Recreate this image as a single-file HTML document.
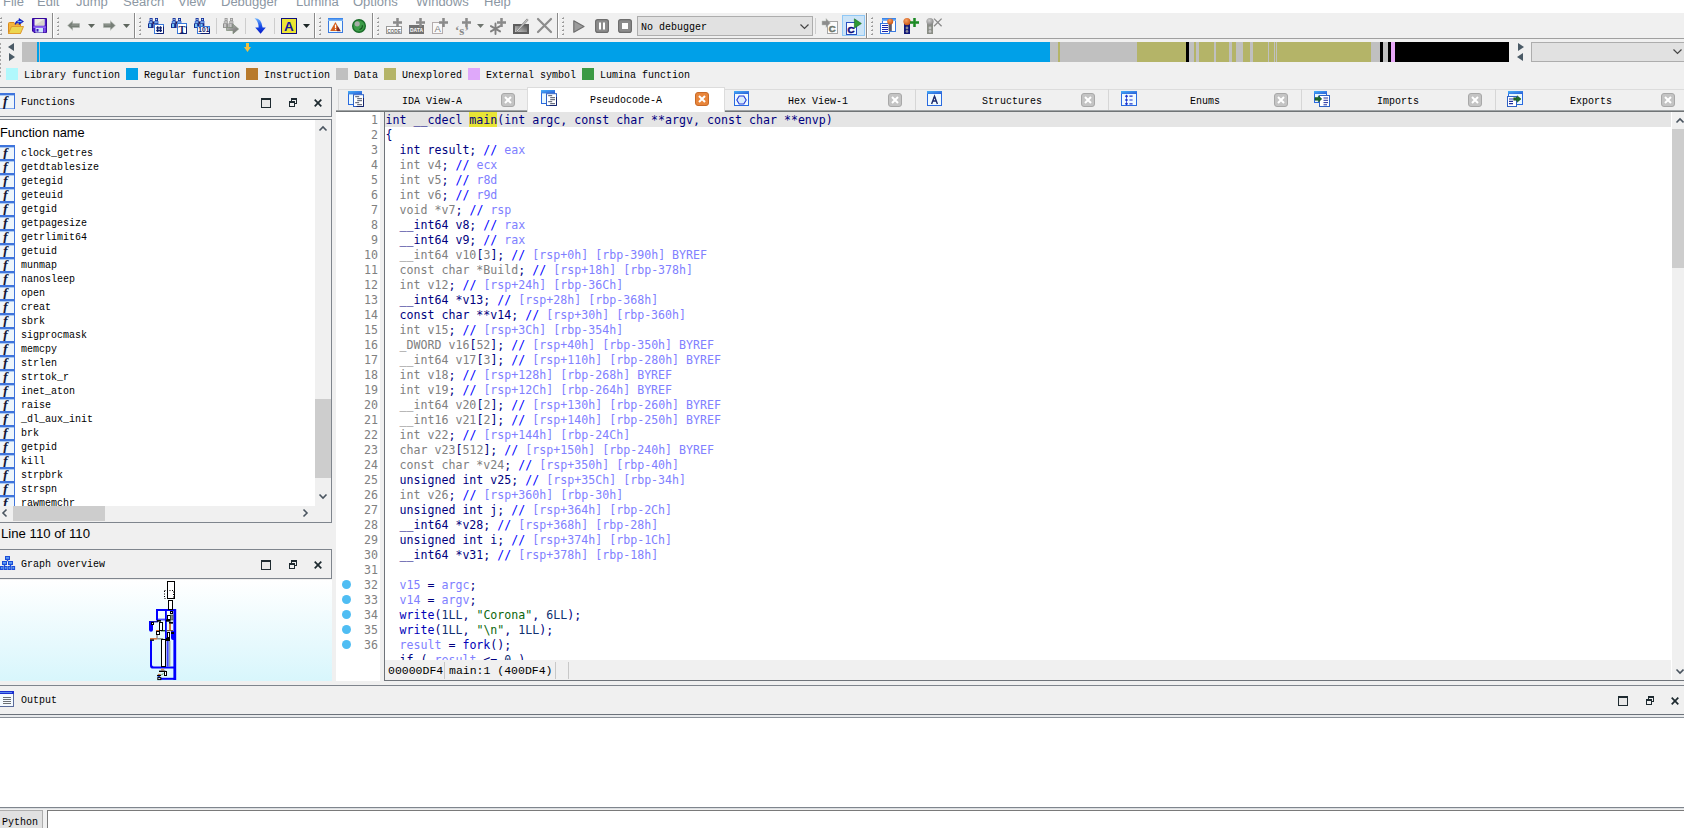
<!DOCTYPE html>
<html lang="en"><head><meta charset="utf-8"><title>IDA</title>
<style>
*{box-sizing:border-box}
html,body{margin:0;padding:0}
body{width:1684px;height:828px;overflow:hidden;background:#f0f0f0;position:relative;font-family:"Liberation Sans",sans-serif;font-size:12px;color:#000}
.a{position:absolute}
.ss{position:absolute;margin-top:1px;font-family:"Liberation Mono",monospace;font-size:11.7px;line-height:14px;height:14px;white-space:nowrap;transform:scaleX(.8546);transform-origin:0 0;color:#000}
.sans{position:absolute;font-family:"Liberation Sans",sans-serif;font-size:12.8px;line-height:14px;white-space:nowrap}
.code{position:absolute;left:385.5px;font-family:"DejaVu Sans Mono","Liberation Mono",monospace;font-size:11.627px;line-height:15px;height:15px;white-space:pre;color:#000080}
.ln{position:absolute;font-family:"DejaVu Sans Mono","Liberation Mono",monospace;font-size:11.627px;line-height:15px;height:15px;width:42px;text-align:right;color:#808080;left:336px}
.g{color:#808080}.c{color:#0000ff}.r{color:#8080ff}.s{color:#0c660c}.f{color:#0000b8}.m{color:#103070}
.dot{position:absolute;left:342px;width:9px;height:9px;border-radius:50%;background:#4fbdf3}
svg{position:absolute;overflow:visible}
</style></head>
<body>
<div class="a" style="left:0;top:0;width:1684px;height:13px;background:#fff;overflow:hidden">
<span class="sans" style="left:3px;top:-5px;color:#8c97a3;font-size:13px">File</span>
<span class="sans" style="left:37px;top:-5px;color:#8c97a3;font-size:13px">Edit</span>
<span class="sans" style="left:76px;top:-5px;color:#8c97a3;font-size:13px">Jump</span>
<span class="sans" style="left:123px;top:-5px;color:#8c97a3;font-size:13px">Search</span>
<span class="sans" style="left:178px;top:-5px;color:#8c97a3;font-size:13px">View</span>
<span class="sans" style="left:221px;top:-5px;color:#8c97a3;font-size:13px">Debugger</span>
<span class="sans" style="left:296px;top:-5px;color:#8c97a3;font-size:13px">Lumina</span>
<span class="sans" style="left:353px;top:-5px;color:#8c97a3;font-size:13px">Options</span>
<span class="sans" style="left:416px;top:-5px;color:#8c97a3;font-size:13px">Windows</span>
<span class="sans" style="left:484px;top:-5px;color:#8c97a3;font-size:13px">Help</span>
</div>
<div class="a" style="left:0px;top:13px;width:1684px;height:26px;background:#f0f0f0;"></div>
<div class="a" style="left:0px;top:38px;width:1684px;height:1px;background:#a0a0a0;"></div>
<div class="a" style="left:1px;top:17px;width:1px;height:1px;background:#b4b4b4;"></div>
<div class="a" style="left:0px;top:18px;width:2px;height:1px;background:#9a9a9a;"></div>
<div class="a" style="left:0px;top:19px;width:1px;height:1px;background:#fafafa;"></div>
<div class="a" style="left:1px;top:21px;width:1px;height:1px;background:#b4b4b4;"></div>
<div class="a" style="left:0px;top:22px;width:2px;height:1px;background:#9a9a9a;"></div>
<div class="a" style="left:0px;top:23px;width:1px;height:1px;background:#fafafa;"></div>
<div class="a" style="left:1px;top:25px;width:1px;height:1px;background:#b4b4b4;"></div>
<div class="a" style="left:0px;top:26px;width:2px;height:1px;background:#9a9a9a;"></div>
<div class="a" style="left:0px;top:27px;width:1px;height:1px;background:#fafafa;"></div>
<div class="a" style="left:1px;top:29px;width:1px;height:1px;background:#b4b4b4;"></div>
<div class="a" style="left:0px;top:30px;width:2px;height:1px;background:#9a9a9a;"></div>
<div class="a" style="left:0px;top:31px;width:1px;height:1px;background:#fafafa;"></div>
<div class="a" style="left:1px;top:33px;width:1px;height:1px;background:#b4b4b4;"></div>
<div class="a" style="left:0px;top:34px;width:2px;height:1px;background:#9a9a9a;"></div>
<div class="a" style="left:0px;top:35px;width:1px;height:1px;background:#fafafa;"></div>
<div class="a" style="left:52px;top:13px;width:1px;height:25px;background:#8a8a8a;"></div>
<div class="a" style="left:53px;top:13px;width:1px;height:25px;background:#fff;"></div>
<div class="a" style="left:58px;top:17px;width:1px;height:1px;background:#b4b4b4;"></div>
<div class="a" style="left:57px;top:18px;width:2px;height:1px;background:#9a9a9a;"></div>
<div class="a" style="left:57px;top:19px;width:1px;height:1px;background:#fafafa;"></div>
<div class="a" style="left:58px;top:21px;width:1px;height:1px;background:#b4b4b4;"></div>
<div class="a" style="left:57px;top:22px;width:2px;height:1px;background:#9a9a9a;"></div>
<div class="a" style="left:57px;top:23px;width:1px;height:1px;background:#fafafa;"></div>
<div class="a" style="left:58px;top:25px;width:1px;height:1px;background:#b4b4b4;"></div>
<div class="a" style="left:57px;top:26px;width:2px;height:1px;background:#9a9a9a;"></div>
<div class="a" style="left:57px;top:27px;width:1px;height:1px;background:#fafafa;"></div>
<div class="a" style="left:58px;top:29px;width:1px;height:1px;background:#b4b4b4;"></div>
<div class="a" style="left:57px;top:30px;width:2px;height:1px;background:#9a9a9a;"></div>
<div class="a" style="left:57px;top:31px;width:1px;height:1px;background:#fafafa;"></div>
<div class="a" style="left:58px;top:33px;width:1px;height:1px;background:#b4b4b4;"></div>
<div class="a" style="left:57px;top:34px;width:2px;height:1px;background:#9a9a9a;"></div>
<div class="a" style="left:57px;top:35px;width:1px;height:1px;background:#fafafa;"></div>
<div class="a" style="left:134px;top:13px;width:1px;height:25px;background:#8a8a8a;"></div>
<div class="a" style="left:135px;top:13px;width:1px;height:25px;background:#fff;"></div>
<div class="a" style="left:140px;top:17px;width:1px;height:1px;background:#b4b4b4;"></div>
<div class="a" style="left:139px;top:18px;width:2px;height:1px;background:#9a9a9a;"></div>
<div class="a" style="left:139px;top:19px;width:1px;height:1px;background:#fafafa;"></div>
<div class="a" style="left:140px;top:21px;width:1px;height:1px;background:#b4b4b4;"></div>
<div class="a" style="left:139px;top:22px;width:2px;height:1px;background:#9a9a9a;"></div>
<div class="a" style="left:139px;top:23px;width:1px;height:1px;background:#fafafa;"></div>
<div class="a" style="left:140px;top:25px;width:1px;height:1px;background:#b4b4b4;"></div>
<div class="a" style="left:139px;top:26px;width:2px;height:1px;background:#9a9a9a;"></div>
<div class="a" style="left:139px;top:27px;width:1px;height:1px;background:#fafafa;"></div>
<div class="a" style="left:140px;top:29px;width:1px;height:1px;background:#b4b4b4;"></div>
<div class="a" style="left:139px;top:30px;width:2px;height:1px;background:#9a9a9a;"></div>
<div class="a" style="left:139px;top:31px;width:1px;height:1px;background:#fafafa;"></div>
<div class="a" style="left:140px;top:33px;width:1px;height:1px;background:#b4b4b4;"></div>
<div class="a" style="left:139px;top:34px;width:2px;height:1px;background:#9a9a9a;"></div>
<div class="a" style="left:139px;top:35px;width:1px;height:1px;background:#fafafa;"></div>
<div class="a" style="left:216px;top:18px;width:1px;height:16px;background:#cdcdcd;"></div>
<div class="a" style="left:245px;top:18px;width:1px;height:16px;background:#cdcdcd;"></div>
<div class="a" style="left:274px;top:18px;width:1px;height:16px;background:#cdcdcd;"></div>
<div class="a" style="left:314px;top:13px;width:1px;height:25px;background:#8a8a8a;"></div>
<div class="a" style="left:315px;top:13px;width:1px;height:25px;background:#fff;"></div>
<div class="a" style="left:320px;top:17px;width:1px;height:1px;background:#b4b4b4;"></div>
<div class="a" style="left:319px;top:18px;width:2px;height:1px;background:#9a9a9a;"></div>
<div class="a" style="left:319px;top:19px;width:1px;height:1px;background:#fafafa;"></div>
<div class="a" style="left:320px;top:21px;width:1px;height:1px;background:#b4b4b4;"></div>
<div class="a" style="left:319px;top:22px;width:2px;height:1px;background:#9a9a9a;"></div>
<div class="a" style="left:319px;top:23px;width:1px;height:1px;background:#fafafa;"></div>
<div class="a" style="left:320px;top:25px;width:1px;height:1px;background:#b4b4b4;"></div>
<div class="a" style="left:319px;top:26px;width:2px;height:1px;background:#9a9a9a;"></div>
<div class="a" style="left:319px;top:27px;width:1px;height:1px;background:#fafafa;"></div>
<div class="a" style="left:320px;top:29px;width:1px;height:1px;background:#b4b4b4;"></div>
<div class="a" style="left:319px;top:30px;width:2px;height:1px;background:#9a9a9a;"></div>
<div class="a" style="left:319px;top:31px;width:1px;height:1px;background:#fafafa;"></div>
<div class="a" style="left:320px;top:33px;width:1px;height:1px;background:#b4b4b4;"></div>
<div class="a" style="left:319px;top:34px;width:2px;height:1px;background:#9a9a9a;"></div>
<div class="a" style="left:319px;top:35px;width:1px;height:1px;background:#fafafa;"></div>
<div class="a" style="left:372px;top:13px;width:1px;height:25px;background:#8a8a8a;"></div>
<div class="a" style="left:373px;top:13px;width:1px;height:25px;background:#fff;"></div>
<div class="a" style="left:378px;top:17px;width:1px;height:1px;background:#b4b4b4;"></div>
<div class="a" style="left:377px;top:18px;width:2px;height:1px;background:#9a9a9a;"></div>
<div class="a" style="left:377px;top:19px;width:1px;height:1px;background:#fafafa;"></div>
<div class="a" style="left:378px;top:21px;width:1px;height:1px;background:#b4b4b4;"></div>
<div class="a" style="left:377px;top:22px;width:2px;height:1px;background:#9a9a9a;"></div>
<div class="a" style="left:377px;top:23px;width:1px;height:1px;background:#fafafa;"></div>
<div class="a" style="left:378px;top:25px;width:1px;height:1px;background:#b4b4b4;"></div>
<div class="a" style="left:377px;top:26px;width:2px;height:1px;background:#9a9a9a;"></div>
<div class="a" style="left:377px;top:27px;width:1px;height:1px;background:#fafafa;"></div>
<div class="a" style="left:378px;top:29px;width:1px;height:1px;background:#b4b4b4;"></div>
<div class="a" style="left:377px;top:30px;width:2px;height:1px;background:#9a9a9a;"></div>
<div class="a" style="left:377px;top:31px;width:1px;height:1px;background:#fafafa;"></div>
<div class="a" style="left:378px;top:33px;width:1px;height:1px;background:#b4b4b4;"></div>
<div class="a" style="left:377px;top:34px;width:2px;height:1px;background:#9a9a9a;"></div>
<div class="a" style="left:377px;top:35px;width:1px;height:1px;background:#fafafa;"></div>
<div class="a" style="left:557px;top:13px;width:1px;height:25px;background:#8a8a8a;"></div>
<div class="a" style="left:558px;top:13px;width:1px;height:25px;background:#fff;"></div>
<div class="a" style="left:563px;top:17px;width:1px;height:1px;background:#b4b4b4;"></div>
<div class="a" style="left:562px;top:18px;width:2px;height:1px;background:#9a9a9a;"></div>
<div class="a" style="left:562px;top:19px;width:1px;height:1px;background:#fafafa;"></div>
<div class="a" style="left:563px;top:21px;width:1px;height:1px;background:#b4b4b4;"></div>
<div class="a" style="left:562px;top:22px;width:2px;height:1px;background:#9a9a9a;"></div>
<div class="a" style="left:562px;top:23px;width:1px;height:1px;background:#fafafa;"></div>
<div class="a" style="left:563px;top:25px;width:1px;height:1px;background:#b4b4b4;"></div>
<div class="a" style="left:562px;top:26px;width:2px;height:1px;background:#9a9a9a;"></div>
<div class="a" style="left:562px;top:27px;width:1px;height:1px;background:#fafafa;"></div>
<div class="a" style="left:563px;top:29px;width:1px;height:1px;background:#b4b4b4;"></div>
<div class="a" style="left:562px;top:30px;width:2px;height:1px;background:#9a9a9a;"></div>
<div class="a" style="left:562px;top:31px;width:1px;height:1px;background:#fafafa;"></div>
<div class="a" style="left:563px;top:33px;width:1px;height:1px;background:#b4b4b4;"></div>
<div class="a" style="left:562px;top:34px;width:2px;height:1px;background:#9a9a9a;"></div>
<div class="a" style="left:562px;top:35px;width:1px;height:1px;background:#fafafa;"></div>
<div class="a" style="left:815px;top:18px;width:1px;height:16px;background:#cdcdcd;"></div>
<div class="a" style="left:866px;top:13px;width:1px;height:25px;background:#8a8a8a;"></div>
<div class="a" style="left:867px;top:13px;width:1px;height:25px;background:#fff;"></div>
<div class="a" style="left:872px;top:17px;width:1px;height:1px;background:#b4b4b4;"></div>
<div class="a" style="left:871px;top:18px;width:2px;height:1px;background:#9a9a9a;"></div>
<div class="a" style="left:871px;top:19px;width:1px;height:1px;background:#fafafa;"></div>
<div class="a" style="left:872px;top:21px;width:1px;height:1px;background:#b4b4b4;"></div>
<div class="a" style="left:871px;top:22px;width:2px;height:1px;background:#9a9a9a;"></div>
<div class="a" style="left:871px;top:23px;width:1px;height:1px;background:#fafafa;"></div>
<div class="a" style="left:872px;top:25px;width:1px;height:1px;background:#b4b4b4;"></div>
<div class="a" style="left:871px;top:26px;width:2px;height:1px;background:#9a9a9a;"></div>
<div class="a" style="left:871px;top:27px;width:1px;height:1px;background:#fafafa;"></div>
<div class="a" style="left:872px;top:29px;width:1px;height:1px;background:#b4b4b4;"></div>
<div class="a" style="left:871px;top:30px;width:2px;height:1px;background:#9a9a9a;"></div>
<div class="a" style="left:871px;top:31px;width:1px;height:1px;background:#fafafa;"></div>
<div class="a" style="left:872px;top:33px;width:1px;height:1px;background:#b4b4b4;"></div>
<div class="a" style="left:871px;top:34px;width:2px;height:1px;background:#9a9a9a;"></div>
<div class="a" style="left:871px;top:35px;width:1px;height:1px;background:#fafafa;"></div>
<div class="a" style="left:842px;top:15px;width:23px;height:21px;background:#cce4f7;border:1px solid #90c8f6"></div>
<svg width="0" height="0" style="left:0;top:0"><defs>
<linearGradient id="gb" x1="0" y1="0" x2="1" y2="1"><stop offset="0" stop-color="#9cc4f4"/><stop offset=".5" stop-color="#2f62cc"/><stop offset="1" stop-color="#16307a"/></linearGradient>
<linearGradient id="gg" x1="0" y1="0" x2="1" y2="1"><stop offset="0" stop-color="#c8c8c8"/><stop offset=".6" stop-color="#8a8a8a"/><stop offset="1" stop-color="#6a6a6a"/></linearGradient>
<linearGradient id="gd" x1="0" y1="0" x2="0" y2="1"><stop offset="0" stop-color="#6ab0ff"/><stop offset=".5" stop-color="#1a50e8"/><stop offset="1" stop-color="#0818c8"/></linearGradient>
<linearGradient id="gt2" x1="0" y1="0" x2="1" y2="1"><stop offset="0" stop-color="#46b0fa"/><stop offset="1" stop-color="#2a5cd6"/></linearGradient>
<linearGradient id="gt" x1="0" y1="0" x2="0" y2="1"><stop offset="0" stop-color="#2a7ae8"/><stop offset="1" stop-color="#8cc0f8"/></linearGradient>
<linearGradient id="gp" x1="0" y1="1" x2="1" y2="0"><stop offset="0" stop-color="#d8d8d8"/><stop offset="1" stop-color="#505050"/></linearGradient>
<radialGradient id="go" cx=".4" cy=".35" r=".7"><stop offset="0" stop-color="#f8a060"/><stop offset="1" stop-color="#c85010"/></radialGradient>
<radialGradient id="gy" cx=".4" cy=".35" r=".7"><stop offset="0" stop-color="#d0d0d0"/><stop offset="1" stop-color="#808080"/></radialGradient>
</defs></svg>
<svg style="left:8px;top:18px" width="16" height="16" viewBox="0 0 16 16"><path d="M0.5 5.5Q0.5 4.5 1.5 4.5H6L7.5 6H12.5V15.5H0.5Z" fill="#f4b43c" stroke="#d88a1c"/><path d="M3.5 8.5H15.5L12.5 15.5H0.5Z" fill="#ecd650" stroke="#e09a30"/><path d="M7 6.5Q7.5 2.5 11 2.5V0.5L15.5 3.5L11 6.5V4.6Q8.6 4.6 7 6.5Z" fill="#1420d8" stroke="#0c14a8" stroke-width=".6"/><path d="M9.6 3.6H13.6" stroke="#7cd8fc" stroke-width="1"/></svg>
<svg style="left:32px;top:18px" width="15" height="15" viewBox="0 0 15 15"><path d="M0.5 0.5H14.5V14.5H2L0.5 13Z" fill="#4a18c8" stroke="#36089c"/><rect x="2.5" y="1" width="10" height="6.5" fill="#eceae2"/><path d="M2.5 7.5L12.5 1V7.5Z" fill="#d8d4cc"/><rect x="1.4" y="8.4" width="12.4" height="1.4" fill="#a47cff"/><rect x="11.6" y="10" width="2" height="4.5" fill="#a47cff" opacity=".6"/><rect x="3.5" y="10" width="7.5" height="4.5" fill="#cfe6fa"/><rect x="4.5" y="11" width="2" height="2.6" fill="#3a18b8"/></svg>
<svg style="left:67px;top:20px" width="13" height="11" viewBox="0 0 13 11"><path d="M6 0V3H13V8H6V11L0 5.5Z" fill="#c6cac6"/><path d="M5.4 1.4V3.7H12.3V7.3H5.4V9.6L1 5.5Z" fill="#767e76"/><path d="M5.4 4.4H11.6V5.4H4Z" fill="#9aa09a"/></svg>
<svg style="left:103px;top:20px" width="13" height="11" viewBox="0 0 13 11"><path d="M7 0V3H0V8H7V11L13 5.5Z" fill="#c6cac6"/><path d="M7.6 1.4V3.7H0.7V7.3H7.6V9.6L12 5.5Z" fill="#767e76"/><path d="M1.4 4.4H7.6V5.4H1.4Z" fill="#9aa09a"/></svg>
<svg style="left:88px;top:24px" width="7" height="4" viewBox="0 0 7 4"><path d="M0 0H7L3.5 4Z" fill="#5e665e"/></svg>
<svg style="left:123px;top:24px" width="7" height="4" viewBox="0 0 7 4"><path d="M0 0H7L3.5 4Z" fill="#5e665e"/></svg>
<svg style="left:148px;top:18px" width="16" height="16" viewBox="0 0 16 16"><rect x="1.6" y="0" width="3" height="3.4" fill="#17309c"/><rect x="0.8" y="3" width="4.2" height="2.6" fill="#2a5ccc"/><rect x="0" y="5.2" width="5" height="4.8" rx=".5" fill="#14268a"/><rect x="2.4" y="0.9" width="1.3" height="1.3" fill="#b4dcfa"/><rect x="1.6" y="3.6" width="2.6" height="1" fill="#b4dcfa"/><rect x="1" y="5.8" width="2.2" height="3.4" fill="#74c4f6"/><rect x="7.0" y="0" width="3" height="3.4" fill="#17309c"/><rect x="6.2" y="3" width="4.2" height="2.6" fill="#2a5ccc"/><rect x="5.4" y="5.2" width="5" height="4.8" rx=".5" fill="#14268a"/><rect x="7.800000000000001" y="0.9" width="1.3" height="1.3" fill="#b4dcfa"/><rect x="7.0" y="3.6" width="2.6" height="1" fill="#b4dcfa"/><rect x="6.4" y="5.8" width="2.2" height="3.4" fill="#74c4f6"/><rect x="4.6" y="3.4" width="1.4" height="2.4" fill="#2a1a4a"/><rect x="6.5" y="6.5" width="9" height="9" fill="#fff" stroke="#3a78d8"/><path d="M15.5 8.5V15.5H8.5" fill="none" stroke="#102070"/><path d="M9.7 8.2v5.8M12.5 8.2v5.8M8.2 9.8h5.8M8.2 12.5h5.8" stroke="#0c2070" stroke-width="1.3"/></svg>
<svg style="left:171px;top:18px" width="16" height="16" viewBox="0 0 16 16"><rect x="1.6" y="0" width="3" height="3.4" fill="#17309c"/><rect x="0.8" y="3" width="4.2" height="2.6" fill="#2a5ccc"/><rect x="0" y="5.2" width="5" height="4.8" rx=".5" fill="#14268a"/><rect x="2.4" y="0.9" width="1.3" height="1.3" fill="#b4dcfa"/><rect x="1.6" y="3.6" width="2.6" height="1" fill="#b4dcfa"/><rect x="1" y="5.8" width="2.2" height="3.4" fill="#74c4f6"/><rect x="7.0" y="0" width="3" height="3.4" fill="#17309c"/><rect x="6.2" y="3" width="4.2" height="2.6" fill="#2a5ccc"/><rect x="5.4" y="5.2" width="5" height="4.8" rx=".5" fill="#14268a"/><rect x="7.800000000000001" y="0.9" width="1.3" height="1.3" fill="#b4dcfa"/><rect x="7.0" y="3.6" width="2.6" height="1" fill="#b4dcfa"/><rect x="6.4" y="5.8" width="2.2" height="3.4" fill="#74c4f6"/><rect x="4.6" y="3.4" width="1.4" height="2.4" fill="#2a1a4a"/><rect x="6.5" y="5.5" width="9" height="10" fill="#fff" stroke="#3a78d8"/><path d="M15.5 8.5V15.5H8.5" fill="none" stroke="#102070"/><text x="7.6" y="14.6" font-family="Liberation Serif,serif" font-size="10.5" font-weight="bold" fill="#0c1868" >T</text></svg>
<svg style="left:194px;top:18px" width="16" height="16" viewBox="0 0 16 16"><rect x="1.6" y="0" width="3" height="3.4" fill="#17309c"/><rect x="0.8" y="3" width="4.2" height="2.6" fill="#2a5ccc"/><rect x="0" y="5.2" width="5" height="4.8" rx=".5" fill="#14268a"/><rect x="2.4" y="0.9" width="1.3" height="1.3" fill="#b4dcfa"/><rect x="1.6" y="3.6" width="2.6" height="1" fill="#b4dcfa"/><rect x="1" y="5.8" width="2.2" height="3.4" fill="#74c4f6"/><rect x="7.0" y="0" width="3" height="3.4" fill="#17309c"/><rect x="6.2" y="3" width="4.2" height="2.6" fill="#2a5ccc"/><rect x="5.4" y="5.2" width="5" height="4.8" rx=".5" fill="#14268a"/><rect x="7.800000000000001" y="0.9" width="1.3" height="1.3" fill="#b4dcfa"/><rect x="7.0" y="3.6" width="2.6" height="1" fill="#b4dcfa"/><rect x="6.4" y="5.8" width="2.2" height="3.4" fill="#74c4f6"/><rect x="4.6" y="3.4" width="1.4" height="2.4" fill="#2a1a4a"/><rect x="3.5" y="8.5" width="12" height="7" fill="#fff" stroke="#3a78d8"/><path d="M15.5 10.5V15.5H6.5" fill="none" stroke="#102070"/><text x="4.3" y="14.4" font-family="Liberation Sans,sans-serif" font-size="6.6" font-weight="bold" fill="#0c1868" >101</text></svg>
<svg style="left:223px;top:18px" width="16" height="16" viewBox="0 0 16 16"><rect x="1.6" y="0" width="3" height="3.4" fill="#9a9a9a"/><rect x="0.8" y="3" width="4.2" height="2.6" fill="#a8a8a8"/><rect x="0" y="5.2" width="5" height="4.8" rx=".5" fill="#8e8e8e"/><rect x="2.4" y="0.9" width="1.3" height="1.3" fill="#d4d4d4"/><rect x="1.6" y="3.6" width="2.6" height="1" fill="#d4d4d4"/><rect x="1" y="5.8" width="2.2" height="3.4" fill="#c4c4c4"/><rect x="7.0" y="0" width="3" height="3.4" fill="#9a9a9a"/><rect x="6.2" y="3" width="4.2" height="2.6" fill="#a8a8a8"/><rect x="5.4" y="5.2" width="5" height="4.8" rx=".5" fill="#8e8e8e"/><rect x="7.800000000000001" y="0.9" width="1.3" height="1.3" fill="#d4d4d4"/><rect x="7.0" y="3.6" width="2.6" height="1" fill="#d4d4d4"/><rect x="6.4" y="5.8" width="2.2" height="3.4" fill="#c4c4c4"/><path d="M3.5 9.5H10V6.2L15.6 11L10 15.8V12.5H3.5Z" fill="url(#gg)" stroke="#7c8c78" stroke-width=".7"/></svg>
<svg style="left:254px;top:18px" width="12" height="16" viewBox="0 0 12 16"><path d="M0.5 0.3Q7.5 0 8.6 9.5H11.8L6.6 15.8L1.2 9.5H4.6Q4.6 3.5 0.5 0.3Z" fill="url(#gd)"/></svg>
<svg style="left:281px;top:18px" width="16" height="16" viewBox="0 0 16 16"><rect x="0.5" y="0.5" width="15" height="15" fill="#ece434" stroke="#10107c"/><text x="3" y="13.2" font-family="Liberation Sans,sans-serif" font-size="13.5" font-weight="bold" fill="#1414a0" >A</text></svg>
<svg style="left:303px;top:24px" width="7" height="4" viewBox="0 0 7 4"><path d="M0 0H7L3.5 4Z" fill="#1c2626"/></svg>
<svg style="left:328px;top:18px" width="15" height="15" viewBox="0 0 15 15"><rect x="0.5" y="0.5" width="14" height="14" fill="#eefafc" stroke="#3a7ae0"/><rect x="0" y="0" width="15" height="3" fill="url(#gt)"/><path d="M7.4 4L12.6 13H2.2Z" fill="#d4601c"/><path d="M9.6 8L12.8 13.2H9Z" fill="#601830" opacity=".75"/><rect x="6.9" y="6.6" width="1.2" height="3.6" fill="#fff"/><rect x="6.9" y="11" width="1.2" height="1.2" fill="#fff"/></svg>
<svg style="left:352px;top:19px" width="14" height="14" viewBox="0 0 14 14"><circle cx="7" cy="7" r="6.3" fill="#3c9c48" stroke="#1a6c2a" stroke-width="1.4"/><circle cx="5.2" cy="4.8" r="2.6" fill="#a8aca8"/><path d="M10.4 6.2Q10.6 9.6 7.4 10.6" fill="none" stroke="#14521e" stroke-width="1.1"/></svg>
<svg style="left:386px;top:18px" width="17" height="16" viewBox="0 0 17 16"><rect x="0.5" y="8.5" width="15" height="7" fill="#fdfdfd" stroke="#9a9a9a"/><text x="1.2" y="14.6" font-family="Liberation Sans,sans-serif" font-size="6" font-weight="bold" fill="#6e6e6e" textLength="13.6" lengthAdjust="spacingAndGlyphs">CODE</text><path d="M10 0h3v3h3v3h-3v3h-3v-3h-3v-3h3z" fill="#8a8a8a" opacity=".55"/><path d="M10.5 0h2v3.5h3.5v2h-3.5v3.5h-2v-3.5h-3.5v-2h3.5z" fill="#8a8a8a"/></svg>
<svg style="left:409px;top:18px" width="17" height="16" viewBox="0 0 17 16"><rect x="0" y="7" width="15" height="9" fill="#727272"/><text x="1" y="14.3" font-family="Liberation Sans,sans-serif" font-size="6" font-weight="bold" fill="#fff" textLength="13" lengthAdjust="spacingAndGlyphs">DATA</text><path d="M10 0h3v3h3v3h-3v3h-3v-3h-3v-3h3z" fill="#8a8a8a" opacity=".55"/><path d="M10.5 0h2v3.5h3.5v2h-3.5v3.5h-2v-3.5h-3.5v-2h3.5z" fill="#8a8a8a"/></svg>
<svg style="left:432px;top:18px" width="17" height="16" viewBox="0 0 17 16"><rect x="0.5" y="4.5" width="10" height="11" fill="#f8f8f8" stroke="#b4acac"/><text x="2.6" y="14" font-family="Liberation Sans,sans-serif" font-size="9.5" font-weight="normal" fill="#808080" >A</text><path d="M10 0h3v3h3v3h-3v3h-3v-3h-3v-3h3z" fill="#8a8a8a" opacity=".55"/><path d="M10.5 0h2v3.5h3.5v2h-3.5v3.5h-2v-3.5h-3.5v-2h3.5z" fill="#8a8a8a"/></svg>
<svg style="left:455px;top:18px" width="17" height="16" viewBox="0 0 17 16"><text x="0" y="16.5" font-family="Liberation Serif,serif" font-size="13" font-weight="bold" fill="#8a8a8a" >‘s’</text><path d="M10 0h3v3h3v3h-3v3h-3v-3h-3v-3h3z" fill="#8a8a8a" opacity=".55"/><path d="M10.5 0h2v3.5h3.5v2h-3.5v3.5h-2v-3.5h-3.5v-2h3.5z" fill="#8a8a8a"/></svg>
<svg style="left:477px;top:24px" width="7" height="4" viewBox="0 0 7 4"><path d="M0 0H7L3.5 4Z" fill="#6e746e"/></svg>
<svg style="left:490px;top:18px" width="17" height="16" viewBox="0 0 17 16"><path d="M5.5 5.5V16M0.9 8.1L10.1 13.4M10.1 8.1L0.9 13.4" stroke="#808080" stroke-width="1.9" fill="none" stroke-linecap="round"/><path d="M10 0h3v3h3v3h-3v3h-3v-3h-3v-3h3z" fill="#8a8a8a" opacity=".55"/><path d="M10.5 0h2v3.5h3.5v2h-3.5v3.5h-2v-3.5h-3.5v-2h3.5z" fill="#8a8a8a"/></svg>
<svg style="left:513px;top:18px" width="16" height="16" viewBox="0 0 16 16"><rect x="1" y="7" width="14" height="8" fill="url(#gp)" stroke="#5e5e5e" stroke-width="2"/><path d="M3.5 13.5L14.8 1.2" stroke="#8a8a8a" stroke-width="2.2"/><path d="M4 13L14.6 1.6" stroke="#ececec" stroke-width=".8"/></svg>
<svg style="left:537px;top:18px" width="15" height="15" viewBox="0 0 15 15"><path d="M1 1L14 14M14 1L1 14" stroke="#8c8c8c" stroke-width="2.2" fill="none" stroke-linecap="round"/></svg>
<svg style="left:573px;top:20px" width="12" height="13" viewBox="0 0 12 13"><path d="M0.8 0.8V12.2L11 6.5Z" fill="#9c9c9c" stroke="#6e6e6e" stroke-width="1.2" stroke-linejoin="round"/></svg>
<svg style="left:595px;top:19px" width="14" height="14" viewBox="0 0 14 14"><rect x="0.6" y="0.6" width="12.8" height="12.8" rx="2.2" fill="#8c8c8c" stroke="#6e6e6e" stroke-width="1.2"/><rect x="4" y="3.5" width="2" height="7" fill="#fff"/><rect x="8" y="3.5" width="2" height="7" fill="#fff"/></svg>
<svg style="left:618px;top:19px" width="14" height="14" viewBox="0 0 14 14"><rect x="0.6" y="0.6" width="12.8" height="12.8" rx="2.2" fill="#8c8c8c" stroke="#6e6e6e" stroke-width="1.2"/><rect x="4" y="4" width="6" height="6" fill="#fff"/></svg>
<svg style="left:822px;top:18px" width="17" height="16" viewBox="0 0 17 16"><rect x="5.5" y="3.5" width="10" height="12" fill="#fcfcfc" stroke="#a6a6a6"/><text x="6.8" y="14.4" font-family="Liberation Sans,sans-serif" font-size="9.6" font-weight="bold" fill="#6e786e" stroke="#6e786e" stroke-width=".5">C</text><path d="M0 3H4V0.6L8.4 5L4 9.4V7H0Z" fill="#8c8c8c" stroke="#b8c0b8" stroke-width=".5"/></svg>
<svg style="left:846px;top:18px" width="17" height="17" viewBox="0 0 17 17"><rect x="0.5" y="4.5" width="10" height="12" fill="#fcfcff" stroke="#2a50c0"/><text x="1.6" y="15.2" font-family="Liberation Sans,sans-serif" font-size="9.8" font-weight="bold" fill="#0a0a7c" stroke="#0a0a7c" stroke-width=".5">C</text><path d="M8.4 0.8V10.2L15.4 5.5Z" fill="#2c9a34" stroke="#186a20" stroke-width=".6"/></svg>
<svg style="left:880px;top:18px" width="16" height="16" viewBox="0 0 16 16"><rect x="2.5" y="0.5" width="13" height="13" fill="#fff" stroke="#3a7ae0"/><rect x="2" y="0" width="14" height="3" fill="url(#gt)"/><rect x="0.5" y="5.5" width="9" height="10" fill="#fff" stroke="#3a7ae0"/><path d="M2 7.5h6M2 9.5h6M2 11.5h6M2 13.5h6" stroke="#1828b0" stroke-width="1"/><rect x="8.6" y="5.5" width="3.2" height="7.5" fill="#5a5a6a"/><circle cx="10.2" cy="3.4" r="3" fill="url(#go)"/></svg>
<svg style="left:903px;top:18px" width="17" height="16" viewBox="0 0 17 16"><rect x="1" y="5" width="6" height="11" fill="#101878"/><circle cx="4" cy="10" r="1.4" fill="#8a8a9a"/><circle cx="4" cy="13.4" r="1.4" fill="#8a8a9a"/><circle cx="4" cy="3.6" r="3.6" fill="url(#go)"/><path d="M10 0h3v3h3v3h-3v3h-3v-3h-3v-3h3z" fill="#1c8a24" opacity=".55"/><path d="M10.5 0h2v3.5h3.5v2h-3.5v3.5h-2v-3.5h-3.5v-2h3.5z" fill="#1c8a24"/></svg>
<svg style="left:926px;top:18px" width="17" height="16" viewBox="0 0 17 16"><rect x="1" y="5" width="6" height="11" fill="#8a8e86"/><circle cx="4" cy="10" r="1.4" fill="#c4c4c4"/><circle cx="4" cy="13.4" r="1.4" fill="#c4c4c4"/><circle cx="4" cy="3.6" r="3.6" fill="url(#gy)"/><path d="M8 0.6L15.6 8.2M15.6 0.6L8 8.2" stroke="#8a8a8a" stroke-width="1.3"/></svg>
<div class="a" style="left:637px;top:16px;width:176px;height:20px;background:#e1e1e1;border:1px solid #adadad"></div>
<div class="ss" style="left:641px;top:19px;">No debugger</div>
<svg style="left:800px;top:24px" width="9" height="6" viewBox="0 0 9 6"><path d="M0.5 0.5L4.5 4.5L8.5 0.5" fill="none" stroke="#444" stroke-width="1.2"/></svg>
<div class="a" style="left:22px;top:42px;width:15px;height:20px;background:#c0c0c0;"></div>
<div class="a" style="left:37px;top:42px;width:1013px;height:20px;background:#00a0e8;"></div>
<div class="a" style="left:39px;top:42px;width:1px;height:20px;background:#b4bcc0;"></div>
<div class="a" style="left:1050px;top:42px;width:87px;height:20px;background:#c0c0c0;"></div>
<div class="a" style="left:1058px;top:42px;width:2px;height:20px;background:#b4b468;"></div>
<div class="a" style="left:1137px;top:42px;width:234px;height:20px;background:#b4b468;"></div>
<div class="a" style="left:1186px;top:42px;width:3px;height:20px;background:#000;"></div>
<div class="a" style="left:1189px;top:42px;width:5px;height:20px;background:#c0c0c0;"></div>
<div class="a" style="left:1196px;top:42px;width:3px;height:20px;background:#c0c0c0;"></div>
<div class="a" style="left:1214px;top:42px;width:2px;height:20px;background:#c0c0c0;"></div>
<div class="a" style="left:1229px;top:42px;width:3px;height:20px;background:#c0c0c0;"></div>
<div class="a" style="left:1236px;top:42px;width:7px;height:20px;background:#c0c0c0;"></div>
<div class="a" style="left:1250px;top:42px;width:3px;height:20px;background:#c0c0c0;"></div>
<div class="a" style="left:1268px;top:42px;width:1px;height:20px;background:#c0c0c0;"></div>
<div class="a" style="left:1274px;top:42px;width:1px;height:20px;background:#c0c0c0;"></div>
<div class="a" style="left:1276px;top:42px;width:1px;height:20px;background:#c0c0c0;"></div>
<div class="a" style="left:1371px;top:42px;width:9px;height:20px;background:#c0c0c0;"></div>
<div class="a" style="left:1380px;top:42px;width:3px;height:20px;background:#000;"></div>
<div class="a" style="left:1383px;top:42px;width:5px;height:20px;background:#c0c0c0;"></div>
<div class="a" style="left:1388px;top:42px;width:3px;height:20px;background:#000;"></div>
<div class="a" style="left:1391px;top:42px;width:4px;height:20px;background:#e8a8f8;"></div>
<div class="a" style="left:1395px;top:42px;width:114px;height:20px;background:#000;"></div>
<svg style="left:8px;top:43px" width="6" height="8" viewBox="0 0 6 8"><path d="M6 0V8L0 4Z" fill="#4a5a66"/></svg>
<svg style="left:9px;top:53px" width="6" height="8" viewBox="0 0 6 8"><path d="M0 0V8L6 4Z" fill="#4a5a66"/></svg>
<div class="a" style="left:0px;top:43px;width:1px;height:2px;background:#a4a4a4;"></div>
<div class="a" style="left:0px;top:47px;width:1px;height:2px;background:#a4a4a4;"></div>
<div class="a" style="left:0px;top:51px;width:1px;height:2px;background:#a4a4a4;"></div>
<div class="a" style="left:0px;top:55px;width:1px;height:2px;background:#a4a4a4;"></div>
<div class="a" style="left:0px;top:59px;width:1px;height:2px;background:#a4a4a4;"></div>
<div class="a" style="left:0px;top:63px;width:1px;height:2px;background:#a4a4a4;"></div>
<div class="a" style="left:0px;top:67px;width:1px;height:2px;background:#a4a4a4;"></div>
<div class="a" style="left:0px;top:71px;width:1px;height:2px;background:#a4a4a4;"></div>
<div class="a" style="left:0px;top:75px;width:1px;height:2px;background:#a4a4a4;"></div>
<svg style="left:1518px;top:43px" width="6" height="8" viewBox="0 0 6 8"><path d="M0 0V8L6 4Z" fill="#4a5a66"/></svg>
<svg style="left:1517px;top:53px" width="6" height="8" viewBox="0 0 6 8"><path d="M6 0V8L0 4Z" fill="#4a5a66"/></svg>
<svg style="left:244px;top:43px" width="7" height="9" viewBox="0 0 7 9"><path d="M2 0H5V4H7L3.5 9L0 4H2Z" fill="#f0c040"/></svg>
<div class="a" style="left:1531px;top:42px;width:160px;height:20px;background:#e1e1e1;border:1px solid #adadad"></div>
<svg style="left:1673px;top:49px" width="9" height="6" viewBox="0 0 9 6"><path d="M0.5 0.5L4.5 4.5L8.5 0.5" fill="none" stroke="#444" stroke-width="1.2"/></svg>
<div class="a" style="left:6px;top:68px;width:12px;height:12px;background:#b0f8fc;"></div>
<div class="ss" style="left:24px;top:67px;">Library function</div>
<div class="a" style="left:126px;top:68px;width:12px;height:12px;background:#00a0e8;"></div>
<div class="ss" style="left:144px;top:67px;">Regular function</div>
<div class="a" style="left:246px;top:68px;width:12px;height:12px;background:#b87a2c;"></div>
<div class="ss" style="left:264px;top:67px;">Instruction</div>
<div class="a" style="left:336px;top:68px;width:12px;height:12px;background:#c0c0c0;"></div>
<div class="ss" style="left:354px;top:67px;">Data</div>
<div class="a" style="left:384px;top:68px;width:12px;height:12px;background:#b4b468;"></div>
<div class="ss" style="left:402px;top:67px;">Unexplored</div>
<div class="a" style="left:468px;top:68px;width:12px;height:12px;background:#dfa8fa;"></div>
<div class="ss" style="left:486px;top:67px;">External symbol</div>
<div class="a" style="left:582px;top:68px;width:12px;height:12px;background:#3c9a44;"></div>
<div class="ss" style="left:600px;top:67px;">Lumina function</div>
<div class="a" style="left:0px;top:87px;width:332px;height:30px;background:#f0f0f0;border-right:1px solid #7f858d;border-bottom:1px solid #7f858d;border-top:1px solid #7f858d"></div>
<svg style="left:0;top:93px;overflow:hidden" width="15" height="16" viewBox="0 0 15 16"><rect x="-1" y="0" width="15" height="16" fill="#eef5fb"/><rect x="-1" y="0" width="16" height="2" fill="#3f74dc"/><rect x="-1" y="2" width="15" height="1" fill="#a9c8f2"/><rect x="14" y="0" width="1" height="16" fill="#3f74dc"/><rect x="-1" y="15" width="15" height="1" fill="#7fa6ea"/><text x="3" y="12.6" font-family="Liberation Serif,serif" font-style="italic" font-weight="bold" font-size="14" fill="#141838">f</text></svg>
<div class="ss" style="left:21px;top:94px;">Functions</div>
<svg style="left:261px;top:98px" width="10" height="10" viewBox="0 0 10 10"><rect x="0.5" y="0.5" width="9" height="9" fill="#e8e8e8" stroke="#1e2a30"/><rect x="0" y="0" width="10" height="2" fill="#1e2a30"/></svg>
<svg style="left:289px;top:98px" width="9" height="9" viewBox="0 0 9 9"><rect x="2.5" y="0.5" width="5" height="5" fill="none" stroke="#1e2a30"/><rect x="2" y="0" width="6" height="2" fill="#1e2a30"/><rect x="0.5" y="3.5" width="5" height="5" fill="#f0f0f0" stroke="#1e2a30"/><rect x="0" y="3" width="6" height="2" fill="#1e2a30"/></svg>
<svg style="left:314px;top:99px" width="8" height="8" viewBox="0 0 8 8"><path d="M0.7 0.7L7.3 7.3M7.3 0.7L0.7 7.3" stroke="#1e2a30" stroke-width="1.7" fill="none"/></svg>
<div class="a" style="left:0px;top:119px;width:332px;height:404px;background:#fff;border-right:1px solid #7f858d;border-bottom:1px solid #7f858d;border-top:1px solid #7f858d"></div>
<div class="sans" style="left:0px;top:126px;">Function name</div>
<div class="a" style="left:0;top:145px;width:315px;height:361px;overflow:hidden">
<svg style="left:0;top:0px;overflow:hidden" width="15" height="14" viewBox="0 0 15 14"><rect x="-1" y="0" width="15" height="16" fill="#eef5fb"/><rect x="-1" y="0" width="16" height="2" fill="#3f74dc"/><rect x="-1" y="2" width="15" height="1" fill="#a9c8f2"/><rect x="14" y="0" width="1" height="16" fill="#3f74dc"/><rect x="-1" y="15" width="15" height="1" fill="#7fa6ea"/><text x="3" y="12.6" font-family="Liberation Serif,serif" font-style="italic" font-weight="bold" font-size="14" fill="#141838">f</text></svg>
<div class="ss" style="left:21px;top:0px">clock_getres</div>
<svg style="left:0;top:14px;overflow:hidden" width="15" height="14" viewBox="0 0 15 14"><rect x="-1" y="0" width="15" height="16" fill="#eef5fb"/><rect x="-1" y="0" width="16" height="2" fill="#3f74dc"/><rect x="-1" y="2" width="15" height="1" fill="#a9c8f2"/><rect x="14" y="0" width="1" height="16" fill="#3f74dc"/><rect x="-1" y="15" width="15" height="1" fill="#7fa6ea"/><text x="3" y="12.6" font-family="Liberation Serif,serif" font-style="italic" font-weight="bold" font-size="14" fill="#141838">f</text></svg>
<div class="ss" style="left:21px;top:14px">getdtablesize</div>
<svg style="left:0;top:28px;overflow:hidden" width="15" height="14" viewBox="0 0 15 14"><rect x="-1" y="0" width="15" height="16" fill="#eef5fb"/><rect x="-1" y="0" width="16" height="2" fill="#3f74dc"/><rect x="-1" y="2" width="15" height="1" fill="#a9c8f2"/><rect x="14" y="0" width="1" height="16" fill="#3f74dc"/><rect x="-1" y="15" width="15" height="1" fill="#7fa6ea"/><text x="3" y="12.6" font-family="Liberation Serif,serif" font-style="italic" font-weight="bold" font-size="14" fill="#141838">f</text></svg>
<div class="ss" style="left:21px;top:28px">getegid</div>
<svg style="left:0;top:42px;overflow:hidden" width="15" height="14" viewBox="0 0 15 14"><rect x="-1" y="0" width="15" height="16" fill="#eef5fb"/><rect x="-1" y="0" width="16" height="2" fill="#3f74dc"/><rect x="-1" y="2" width="15" height="1" fill="#a9c8f2"/><rect x="14" y="0" width="1" height="16" fill="#3f74dc"/><rect x="-1" y="15" width="15" height="1" fill="#7fa6ea"/><text x="3" y="12.6" font-family="Liberation Serif,serif" font-style="italic" font-weight="bold" font-size="14" fill="#141838">f</text></svg>
<div class="ss" style="left:21px;top:42px">geteuid</div>
<svg style="left:0;top:56px;overflow:hidden" width="15" height="14" viewBox="0 0 15 14"><rect x="-1" y="0" width="15" height="16" fill="#eef5fb"/><rect x="-1" y="0" width="16" height="2" fill="#3f74dc"/><rect x="-1" y="2" width="15" height="1" fill="#a9c8f2"/><rect x="14" y="0" width="1" height="16" fill="#3f74dc"/><rect x="-1" y="15" width="15" height="1" fill="#7fa6ea"/><text x="3" y="12.6" font-family="Liberation Serif,serif" font-style="italic" font-weight="bold" font-size="14" fill="#141838">f</text></svg>
<div class="ss" style="left:21px;top:56px">getgid</div>
<svg style="left:0;top:70px;overflow:hidden" width="15" height="14" viewBox="0 0 15 14"><rect x="-1" y="0" width="15" height="16" fill="#eef5fb"/><rect x="-1" y="0" width="16" height="2" fill="#3f74dc"/><rect x="-1" y="2" width="15" height="1" fill="#a9c8f2"/><rect x="14" y="0" width="1" height="16" fill="#3f74dc"/><rect x="-1" y="15" width="15" height="1" fill="#7fa6ea"/><text x="3" y="12.6" font-family="Liberation Serif,serif" font-style="italic" font-weight="bold" font-size="14" fill="#141838">f</text></svg>
<div class="ss" style="left:21px;top:70px">getpagesize</div>
<svg style="left:0;top:84px;overflow:hidden" width="15" height="14" viewBox="0 0 15 14"><rect x="-1" y="0" width="15" height="16" fill="#eef5fb"/><rect x="-1" y="0" width="16" height="2" fill="#3f74dc"/><rect x="-1" y="2" width="15" height="1" fill="#a9c8f2"/><rect x="14" y="0" width="1" height="16" fill="#3f74dc"/><rect x="-1" y="15" width="15" height="1" fill="#7fa6ea"/><text x="3" y="12.6" font-family="Liberation Serif,serif" font-style="italic" font-weight="bold" font-size="14" fill="#141838">f</text></svg>
<div class="ss" style="left:21px;top:84px">getrlimit64</div>
<svg style="left:0;top:98px;overflow:hidden" width="15" height="14" viewBox="0 0 15 14"><rect x="-1" y="0" width="15" height="16" fill="#eef5fb"/><rect x="-1" y="0" width="16" height="2" fill="#3f74dc"/><rect x="-1" y="2" width="15" height="1" fill="#a9c8f2"/><rect x="14" y="0" width="1" height="16" fill="#3f74dc"/><rect x="-1" y="15" width="15" height="1" fill="#7fa6ea"/><text x="3" y="12.6" font-family="Liberation Serif,serif" font-style="italic" font-weight="bold" font-size="14" fill="#141838">f</text></svg>
<div class="ss" style="left:21px;top:98px">getuid</div>
<svg style="left:0;top:112px;overflow:hidden" width="15" height="14" viewBox="0 0 15 14"><rect x="-1" y="0" width="15" height="16" fill="#eef5fb"/><rect x="-1" y="0" width="16" height="2" fill="#3f74dc"/><rect x="-1" y="2" width="15" height="1" fill="#a9c8f2"/><rect x="14" y="0" width="1" height="16" fill="#3f74dc"/><rect x="-1" y="15" width="15" height="1" fill="#7fa6ea"/><text x="3" y="12.6" font-family="Liberation Serif,serif" font-style="italic" font-weight="bold" font-size="14" fill="#141838">f</text></svg>
<div class="ss" style="left:21px;top:112px">munmap</div>
<svg style="left:0;top:126px;overflow:hidden" width="15" height="14" viewBox="0 0 15 14"><rect x="-1" y="0" width="15" height="16" fill="#eef5fb"/><rect x="-1" y="0" width="16" height="2" fill="#3f74dc"/><rect x="-1" y="2" width="15" height="1" fill="#a9c8f2"/><rect x="14" y="0" width="1" height="16" fill="#3f74dc"/><rect x="-1" y="15" width="15" height="1" fill="#7fa6ea"/><text x="3" y="12.6" font-family="Liberation Serif,serif" font-style="italic" font-weight="bold" font-size="14" fill="#141838">f</text></svg>
<div class="ss" style="left:21px;top:126px">nanosleep</div>
<svg style="left:0;top:140px;overflow:hidden" width="15" height="14" viewBox="0 0 15 14"><rect x="-1" y="0" width="15" height="16" fill="#eef5fb"/><rect x="-1" y="0" width="16" height="2" fill="#3f74dc"/><rect x="-1" y="2" width="15" height="1" fill="#a9c8f2"/><rect x="14" y="0" width="1" height="16" fill="#3f74dc"/><rect x="-1" y="15" width="15" height="1" fill="#7fa6ea"/><text x="3" y="12.6" font-family="Liberation Serif,serif" font-style="italic" font-weight="bold" font-size="14" fill="#141838">f</text></svg>
<div class="ss" style="left:21px;top:140px">open</div>
<svg style="left:0;top:154px;overflow:hidden" width="15" height="14" viewBox="0 0 15 14"><rect x="-1" y="0" width="15" height="16" fill="#eef5fb"/><rect x="-1" y="0" width="16" height="2" fill="#3f74dc"/><rect x="-1" y="2" width="15" height="1" fill="#a9c8f2"/><rect x="14" y="0" width="1" height="16" fill="#3f74dc"/><rect x="-1" y="15" width="15" height="1" fill="#7fa6ea"/><text x="3" y="12.6" font-family="Liberation Serif,serif" font-style="italic" font-weight="bold" font-size="14" fill="#141838">f</text></svg>
<div class="ss" style="left:21px;top:154px">creat</div>
<svg style="left:0;top:168px;overflow:hidden" width="15" height="14" viewBox="0 0 15 14"><rect x="-1" y="0" width="15" height="16" fill="#eef5fb"/><rect x="-1" y="0" width="16" height="2" fill="#3f74dc"/><rect x="-1" y="2" width="15" height="1" fill="#a9c8f2"/><rect x="14" y="0" width="1" height="16" fill="#3f74dc"/><rect x="-1" y="15" width="15" height="1" fill="#7fa6ea"/><text x="3" y="12.6" font-family="Liberation Serif,serif" font-style="italic" font-weight="bold" font-size="14" fill="#141838">f</text></svg>
<div class="ss" style="left:21px;top:168px">sbrk</div>
<svg style="left:0;top:182px;overflow:hidden" width="15" height="14" viewBox="0 0 15 14"><rect x="-1" y="0" width="15" height="16" fill="#eef5fb"/><rect x="-1" y="0" width="16" height="2" fill="#3f74dc"/><rect x="-1" y="2" width="15" height="1" fill="#a9c8f2"/><rect x="14" y="0" width="1" height="16" fill="#3f74dc"/><rect x="-1" y="15" width="15" height="1" fill="#7fa6ea"/><text x="3" y="12.6" font-family="Liberation Serif,serif" font-style="italic" font-weight="bold" font-size="14" fill="#141838">f</text></svg>
<div class="ss" style="left:21px;top:182px">sigprocmask</div>
<svg style="left:0;top:196px;overflow:hidden" width="15" height="14" viewBox="0 0 15 14"><rect x="-1" y="0" width="15" height="16" fill="#eef5fb"/><rect x="-1" y="0" width="16" height="2" fill="#3f74dc"/><rect x="-1" y="2" width="15" height="1" fill="#a9c8f2"/><rect x="14" y="0" width="1" height="16" fill="#3f74dc"/><rect x="-1" y="15" width="15" height="1" fill="#7fa6ea"/><text x="3" y="12.6" font-family="Liberation Serif,serif" font-style="italic" font-weight="bold" font-size="14" fill="#141838">f</text></svg>
<div class="ss" style="left:21px;top:196px">memcpy</div>
<svg style="left:0;top:210px;overflow:hidden" width="15" height="14" viewBox="0 0 15 14"><rect x="-1" y="0" width="15" height="16" fill="#eef5fb"/><rect x="-1" y="0" width="16" height="2" fill="#3f74dc"/><rect x="-1" y="2" width="15" height="1" fill="#a9c8f2"/><rect x="14" y="0" width="1" height="16" fill="#3f74dc"/><rect x="-1" y="15" width="15" height="1" fill="#7fa6ea"/><text x="3" y="12.6" font-family="Liberation Serif,serif" font-style="italic" font-weight="bold" font-size="14" fill="#141838">f</text></svg>
<div class="ss" style="left:21px;top:210px">strlen</div>
<svg style="left:0;top:224px;overflow:hidden" width="15" height="14" viewBox="0 0 15 14"><rect x="-1" y="0" width="15" height="16" fill="#eef5fb"/><rect x="-1" y="0" width="16" height="2" fill="#3f74dc"/><rect x="-1" y="2" width="15" height="1" fill="#a9c8f2"/><rect x="14" y="0" width="1" height="16" fill="#3f74dc"/><rect x="-1" y="15" width="15" height="1" fill="#7fa6ea"/><text x="3" y="12.6" font-family="Liberation Serif,serif" font-style="italic" font-weight="bold" font-size="14" fill="#141838">f</text></svg>
<div class="ss" style="left:21px;top:224px">strtok_r</div>
<svg style="left:0;top:238px;overflow:hidden" width="15" height="14" viewBox="0 0 15 14"><rect x="-1" y="0" width="15" height="16" fill="#eef5fb"/><rect x="-1" y="0" width="16" height="2" fill="#3f74dc"/><rect x="-1" y="2" width="15" height="1" fill="#a9c8f2"/><rect x="14" y="0" width="1" height="16" fill="#3f74dc"/><rect x="-1" y="15" width="15" height="1" fill="#7fa6ea"/><text x="3" y="12.6" font-family="Liberation Serif,serif" font-style="italic" font-weight="bold" font-size="14" fill="#141838">f</text></svg>
<div class="ss" style="left:21px;top:238px">inet_aton</div>
<svg style="left:0;top:252px;overflow:hidden" width="15" height="14" viewBox="0 0 15 14"><rect x="-1" y="0" width="15" height="16" fill="#eef5fb"/><rect x="-1" y="0" width="16" height="2" fill="#3f74dc"/><rect x="-1" y="2" width="15" height="1" fill="#a9c8f2"/><rect x="14" y="0" width="1" height="16" fill="#3f74dc"/><rect x="-1" y="15" width="15" height="1" fill="#7fa6ea"/><text x="3" y="12.6" font-family="Liberation Serif,serif" font-style="italic" font-weight="bold" font-size="14" fill="#141838">f</text></svg>
<div class="ss" style="left:21px;top:252px">raise</div>
<svg style="left:0;top:266px;overflow:hidden" width="15" height="14" viewBox="0 0 15 14"><rect x="-1" y="0" width="15" height="16" fill="#eef5fb"/><rect x="-1" y="0" width="16" height="2" fill="#3f74dc"/><rect x="-1" y="2" width="15" height="1" fill="#a9c8f2"/><rect x="14" y="0" width="1" height="16" fill="#3f74dc"/><rect x="-1" y="15" width="15" height="1" fill="#7fa6ea"/><text x="3" y="12.6" font-family="Liberation Serif,serif" font-style="italic" font-weight="bold" font-size="14" fill="#141838">f</text></svg>
<div class="ss" style="left:21px;top:266px">_dl_aux_init</div>
<svg style="left:0;top:280px;overflow:hidden" width="15" height="14" viewBox="0 0 15 14"><rect x="-1" y="0" width="15" height="16" fill="#eef5fb"/><rect x="-1" y="0" width="16" height="2" fill="#3f74dc"/><rect x="-1" y="2" width="15" height="1" fill="#a9c8f2"/><rect x="14" y="0" width="1" height="16" fill="#3f74dc"/><rect x="-1" y="15" width="15" height="1" fill="#7fa6ea"/><text x="3" y="12.6" font-family="Liberation Serif,serif" font-style="italic" font-weight="bold" font-size="14" fill="#141838">f</text></svg>
<div class="ss" style="left:21px;top:280px">brk</div>
<svg style="left:0;top:294px;overflow:hidden" width="15" height="14" viewBox="0 0 15 14"><rect x="-1" y="0" width="15" height="16" fill="#eef5fb"/><rect x="-1" y="0" width="16" height="2" fill="#3f74dc"/><rect x="-1" y="2" width="15" height="1" fill="#a9c8f2"/><rect x="14" y="0" width="1" height="16" fill="#3f74dc"/><rect x="-1" y="15" width="15" height="1" fill="#7fa6ea"/><text x="3" y="12.6" font-family="Liberation Serif,serif" font-style="italic" font-weight="bold" font-size="14" fill="#141838">f</text></svg>
<div class="ss" style="left:21px;top:294px">getpid</div>
<svg style="left:0;top:308px;overflow:hidden" width="15" height="14" viewBox="0 0 15 14"><rect x="-1" y="0" width="15" height="16" fill="#eef5fb"/><rect x="-1" y="0" width="16" height="2" fill="#3f74dc"/><rect x="-1" y="2" width="15" height="1" fill="#a9c8f2"/><rect x="14" y="0" width="1" height="16" fill="#3f74dc"/><rect x="-1" y="15" width="15" height="1" fill="#7fa6ea"/><text x="3" y="12.6" font-family="Liberation Serif,serif" font-style="italic" font-weight="bold" font-size="14" fill="#141838">f</text></svg>
<div class="ss" style="left:21px;top:308px">kill</div>
<svg style="left:0;top:322px;overflow:hidden" width="15" height="14" viewBox="0 0 15 14"><rect x="-1" y="0" width="15" height="16" fill="#eef5fb"/><rect x="-1" y="0" width="16" height="2" fill="#3f74dc"/><rect x="-1" y="2" width="15" height="1" fill="#a9c8f2"/><rect x="14" y="0" width="1" height="16" fill="#3f74dc"/><rect x="-1" y="15" width="15" height="1" fill="#7fa6ea"/><text x="3" y="12.6" font-family="Liberation Serif,serif" font-style="italic" font-weight="bold" font-size="14" fill="#141838">f</text></svg>
<div class="ss" style="left:21px;top:322px">strpbrk</div>
<svg style="left:0;top:336px;overflow:hidden" width="15" height="14" viewBox="0 0 15 14"><rect x="-1" y="0" width="15" height="16" fill="#eef5fb"/><rect x="-1" y="0" width="16" height="2" fill="#3f74dc"/><rect x="-1" y="2" width="15" height="1" fill="#a9c8f2"/><rect x="14" y="0" width="1" height="16" fill="#3f74dc"/><rect x="-1" y="15" width="15" height="1" fill="#7fa6ea"/><text x="3" y="12.6" font-family="Liberation Serif,serif" font-style="italic" font-weight="bold" font-size="14" fill="#141838">f</text></svg>
<div class="ss" style="left:21px;top:336px">strspn</div>
<svg style="left:0;top:350px;overflow:hidden" width="15" height="14" viewBox="0 0 15 14"><rect x="-1" y="0" width="15" height="16" fill="#eef5fb"/><rect x="-1" y="0" width="16" height="2" fill="#3f74dc"/><rect x="-1" y="2" width="15" height="1" fill="#a9c8f2"/><rect x="14" y="0" width="1" height="16" fill="#3f74dc"/><rect x="-1" y="15" width="15" height="1" fill="#7fa6ea"/><text x="3" y="12.6" font-family="Liberation Serif,serif" font-style="italic" font-weight="bold" font-size="14" fill="#141838">f</text></svg>
<div class="ss" style="left:21px;top:350px">rawmemchr</div>
</div>
<div class="a" style="left:315px;top:120px;width:16px;height:386px;background:#f0f0f0;"></div>
<div class="a" style="left:315px;top:399px;width:16px;height:79px;background:#cdcdcd;"></div>
<svg style="left:319px;top:126px" width="8" height="5" viewBox="0 0 8 5"><path d="M0.5 4.5L4 1L7.5 4.5" fill="none" stroke="#4a5560" stroke-width="1.6"/></svg>
<svg style="left:319px;top:494px" width="8" height="5" viewBox="0 0 8 5"><path d="M0.5 0.5L4 4L7.5 0.5" fill="none" stroke="#4a5560" stroke-width="1.6"/></svg>
<div class="a" style="left:0px;top:506px;width:331px;height:16px;background:#f0f0f0;"></div>
<div class="a" style="left:13px;top:506px;width:92px;height:15px;background:#cdcdcd;"></div>
<svg style="left:2px;top:509px" width="5" height="8" viewBox="0 0 5 8"><path d="M4.5 0.5L1 4L4.5 7.5" fill="none" stroke="#4a5560" stroke-width="1.6"/></svg>
<svg style="left:303px;top:509px" width="5" height="8" viewBox="0 0 5 8"><path d="M0.5 0.5L4 4L0.5 7.5" fill="none" stroke="#4a5560" stroke-width="1.6"/></svg>
<div class="sans" style="left:1px;top:527px;font-size:13.2px">Line 110 of 110</div>
<div class="a" style="left:0px;top:549px;width:332px;height:30px;background:#f0f0f0;border-right:1px solid #7f858d;border-bottom:1px solid #7f858d;border-top:1px solid #7f858d"></div>
<svg style="left:0px;top:556px" width="15" height="14" viewBox="0 0 15 14"><rect x="5" y="0" width="5" height="4" fill="#1c4cd8"/><rect x="6" y="1" width="3" height="1.7999999999999998" fill="#5c9cf0"/><rect x="2" y="5" width="5" height="4" fill="#1c4cd8"/><rect x="3" y="6" width="3" height="1.7999999999999998" fill="#5c9cf0"/><rect x="8" y="5" width="5" height="4" fill="#1c4cd8"/><rect x="9" y="6" width="3" height="1.7999999999999998" fill="#5c9cf0"/><rect x="0" y="10" width="3.6" height="4" fill="#1c4cd8"/><rect x="1" y="11" width="1.6" height="1.7999999999999998" fill="#5c9cf0"/><rect x="3.9" y="10" width="3.6" height="4" fill="#1c4cd8"/><rect x="4.9" y="11" width="1.6" height="1.7999999999999998" fill="#5c9cf0"/><rect x="7.7" y="10" width="3.6" height="4" fill="#1c4cd8"/><rect x="8.7" y="11" width="1.6" height="1.7999999999999998" fill="#5c9cf0"/><rect x="11.5" y="10" width="3.6" height="4" fill="#1c4cd8"/><rect x="12.5" y="11" width="1.6" height="1.7999999999999998" fill="#5c9cf0"/><path d="M7.5 4v1.2M4.5 9v1M10.5 9v1" stroke="#1c4cd8" stroke-width="1.4"/></svg>
<div class="ss" style="left:21px;top:556px;">Graph overview</div>
<svg style="left:261px;top:560px" width="10" height="10" viewBox="0 0 10 10"><rect x="0.5" y="0.5" width="9" height="9" fill="#e8e8e8" stroke="#1e2a30"/><rect x="0" y="0" width="10" height="2" fill="#1e2a30"/></svg>
<svg style="left:289px;top:560px" width="9" height="9" viewBox="0 0 9 9"><rect x="2.5" y="0.5" width="5" height="5" fill="none" stroke="#1e2a30"/><rect x="2" y="0" width="6" height="2" fill="#1e2a30"/><rect x="0.5" y="3.5" width="5" height="5" fill="#f0f0f0" stroke="#1e2a30"/><rect x="0" y="3" width="6" height="2" fill="#1e2a30"/></svg>
<svg style="left:314px;top:561px" width="8" height="8" viewBox="0 0 8 8"><path d="M0.7 0.7L7.3 7.3M7.3 0.7L0.7 7.3" stroke="#1e2a30" stroke-width="1.7" fill="none"/></svg>
<div class="a" style="left:0;top:580px;width:332px;height:101px;background:linear-gradient(#ffffff,#d8f6fc)"></div>
<svg style="left:0;top:0" width="332" height="828" viewBox="0 0 332 828"><rect x="156" y="609" width="20" height="2" fill="#0000ff"/><rect x="156" y="609" width="2" height="11.5" fill="#0000ff"/><rect x="173.4" y="609" width="2.8" height="71" fill="#0000ff"/><rect x="165" y="611" width="1.8" height="30" fill="#0000ff"/><rect x="158" y="618.6" width="7" height="1.9" fill="#4848ff"/><rect x="149" y="621" width="9" height="1.4" fill="#1818a0"/><path d="M149 621.4H153V629.8Q153 631.8 151 631.8Q149 631.8 149 629.8Z" fill="#0000ff"/><path d="M171 631H174V640H173Q171 640 171 638Z" fill="#0000ff"/><rect x="150" y="640.5" width="2" height="24.5" fill="#0000ff"/><path d="M150 664V665.4Q150 668.6 153.2 668.6H174V666.4H153.6Q152 666.4 152 664.8V664Z" fill="#0000ff"/><rect x="160.8" y="677.8" width="15.2" height="2.0" fill="#0000ff"/><rect x="166.6" y="641" width="2.0" height="25.6" fill="#3c3cff"/><rect x="168.6" y="641" width="0.9" height="25.6" fill="#6080e0"/><rect x="169.5" y="641" width="0.8" height="25.6" fill="#8a8a74"/><rect x="169.1" y="623.6" width="1.8" height="6.8" fill="#d0692a"/><rect x="161" y="630" width="4" height="1.4" fill="#1f5a1f"/><rect x="167" y="630" width="6" height="1.2" fill="#7a5a3a"/><rect x="156" y="630" width="3" height="1" fill="#d0692a"/><rect x="156.3" y="634.4" width="1.5" height="3.6" fill="#909090"/><rect x="150" y="638" width="7" height="1.6" fill="#d8783c"/><rect x="157" y="638" width="6.2" height="1.5" fill="#8c968c"/><rect x="161" y="668.7" width="3.2" height="1.7" fill="#e09060"/><rect x="158" y="673.8" width="2.6" height="1.1" fill="#e08040"/><path d="M161.4 675.2L163.2 673.4" stroke="#2a8a3a" stroke-width="1"/><rect x="157" y="620" width="4" height="1.7" fill="#000"/><rect x="166" y="619.4" width="4.6" height="2.3" fill="#000"/><rect x="169" y="621.9" width="4" height="1.8" fill="#000"/><rect x="150" y="639.4" width="4" height="1.4" fill="#000"/><rect x="166" y="637.8" width="4" height="3.2" fill="#000"/><rect x="159" y="670.6" width="6.4" height="1.4" fill="#000"/><rect x="157" y="674.9" width="4" height="1.2" fill="#000"/><rect x="157.6" y="676.1" width="2.4" height="1.1" fill="#1030d0"/><rect x="167.5" y="581.5" width="7" height="17" fill="#fff" stroke="#000" stroke-width="1"/><rect x="168.5" y="600.5" width="4" height="9" fill="#fff" stroke="#000" stroke-width="1"/><rect x="170.5" y="611.5" width="2" height="2" fill="#fff" stroke="#000" stroke-width="1"/><rect x="167.5" y="615.5" width="3" height="4" fill="#fff" stroke="#000" stroke-width="1"/><rect x="170.6" y="615" width="2.4" height="5" fill="#8c8c8c" stroke="#2a4a2a" stroke-width=".6"/><rect x="151.5" y="622.5" width="2" height="2" fill="#fff" stroke="#000" stroke-width="1"/><rect x="159.5" y="622.5" width="3" height="8" fill="#fff" stroke="#000" stroke-width="1"/><rect x="156.5" y="631.5" width="3" height="3" fill="#fff" stroke="#000" stroke-width="1"/><rect x="167.5" y="632.5" width="2" height="5" fill="#fff" stroke="#000" stroke-width="1"/><rect x="171.5" y="632.5" width="2" height="1" fill="#fff" stroke="#000" stroke-width="1"/><rect x="161.5" y="639.5" width="4" height="27" fill="#fff" stroke="#000" stroke-width="1"/><rect x="164.5" y="671.5" width="2" height="4" fill="#fff" stroke="#000" stroke-width="1"/><rect x="157.8" y="677.6" width="3" height="2" fill="#dfe8ff" stroke="#000" stroke-width="1"/><rect x="164.5" y="590.5" width="9" height="8" fill="none" stroke="#000" stroke-width="1" stroke-dasharray="1 1.5"/></svg>
<div class="a" style="left:336px;top:110px;width:1348px;height:1px;background:#a0a4a6;"></div>
<div class="a" style="left:336px;top:111px;width:1348px;height:1px;background:#707476;"></div>
<div class="a" style="left:338px;top:89px;width:1346px;height:1px;background:#dcdcdc;"></div>
<div class="a" style="left:338px;top:89px;width:1px;height:21px;background:#d6d6d6;"></div>
<div class="a" style="left:915px;top:89px;width:1px;height:21px;background:#d6d6d6;"></div>
<div class="a" style="left:1108px;top:89px;width:1px;height:21px;background:#d6d6d6;"></div>
<div class="a" style="left:1301px;top:89px;width:1px;height:21px;background:#d6d6d6;"></div>
<div class="a" style="left:1495px;top:89px;width:1px;height:21px;background:#d6d6d6;"></div>
<div class="a" style="left:527px;top:87px;width:198px;height:25px;background:#fff;border:1px solid #dcdcdc;border-bottom:none"></div>
<svg style="left:348px;top:91px" width="16" height="16" viewBox="0 0 16 16"><rect x="0.5" y="0.5" width="13" height="13" fill="#e8f8ff" stroke="#2a6ae0"/><rect x="0" y="0" width="14" height="3.4" fill="url(#gt2)"/><rect x="5.5" y="3.7" width="10" height="11.8" fill="#fff" stroke="#2f62c4"/><path d="M15.5 7V15.5H8.5" fill="none" stroke="#16266c"/><path d="M7.2 5.7h4M9.2 7.7h4.8M9.2 9.7h4.8M7.2 11.7h4M9.2 13.7h4.8" stroke="#4a5266" stroke-width="1"/></svg>
<div class="ss" style="left:402px;top:93px;">IDA View-A</div>
<svg style="left:501px;top:93px" width="14" height="14" viewBox="0 0 14 14"><rect x="0.5" y="0.5" width="13" height="13" rx="2.5" fill="#c4c4c4" stroke="#a8a8a8"/><path d="M4 4L10 10M10 4L4 10" stroke="#fff" stroke-width="2"/></svg>
<svg style="left:541px;top:90px" width="16" height="16" viewBox="0 0 16 16"><rect x="0.5" y="0.5" width="13" height="13" fill="#e8f8ff" stroke="#2a6ae0"/><rect x="0" y="0" width="14" height="3.4" fill="url(#gt2)"/><rect x="5.5" y="3.7" width="10" height="11.8" fill="#fff" stroke="#2f62c4"/><path d="M15.5 7V15.5H8.5" fill="none" stroke="#16266c"/><path d="M7.2 5.7h4M9.2 7.7h4.8M9.2 9.7h4.8M7.2 11.7h4M9.2 13.7h4.8" stroke="#4a5266" stroke-width="1"/></svg>
<div class="ss" style="left:590px;top:92px;">Pseudocode-A</div>
<svg style="left:695px;top:92px" width="14" height="14" viewBox="0 0 14 14"><rect x="0.5" y="0.5" width="13" height="13" rx="2.5" fill="#e8853a" stroke="#c86a28"/><path d="M4 4L10 10M10 4L4 10" stroke="#fff" stroke-width="2"/></svg>
<svg style="left:734px;top:91px" width="16" height="16" viewBox="0 0 16 16"><rect x="0.5" y="0.5" width="14" height="14" fill="#f0faff" stroke="#2a6ae0"/><rect x="0" y="0" width="15" height="3" fill="url(#gt2)"/><path d="M5.2 5h4.6l2.4 4-2.4 4h-4.6l-2.4-4z" fill="#d8ecfc" stroke="#2438d8" stroke-width="1.1"/></svg>
<div class="ss" style="left:788px;top:93px;">Hex View-1</div>
<svg style="left:888px;top:93px" width="14" height="14" viewBox="0 0 14 14"><rect x="0.5" y="0.5" width="13" height="13" rx="2.5" fill="#c4c4c4" stroke="#a8a8a8"/><path d="M4 4L10 10M10 4L4 10" stroke="#fff" stroke-width="2"/></svg>
<svg style="left:927px;top:91px" width="16" height="16" viewBox="0 0 16 16"><rect x="0.5" y="0.5" width="14" height="14" fill="#f0faff" stroke="#2a6ae0"/><rect x="0" y="0" width="15" height="3" fill="url(#gt2)"/><path d="M4.6 13L7.5 5.2L10.4 13M5.6 10H9.4M6.2 6.6H8.8" fill="none" stroke="#1c2a6c" stroke-width="1.4"/></svg>
<div class="ss" style="left:982px;top:93px;">Structures</div>
<svg style="left:1081px;top:93px" width="14" height="14" viewBox="0 0 14 14"><rect x="0.5" y="0.5" width="13" height="13" rx="2.5" fill="#c4c4c4" stroke="#a8a8a8"/><path d="M4 4L10 10M10 4L4 10" stroke="#fff" stroke-width="2"/></svg>
<svg style="left:1121px;top:91px" width="16" height="16" viewBox="0 0 16 16"><rect x="0.5" y="0.5" width="15" height="14" fill="#f0faff" stroke="#2a6ae0"/><rect x="0" y="0" width="16" height="3" fill="url(#gt2)"/><g fill="#1c34d0"><path d="M5.5 3.6l1.6 1.6-1.6 1.6-1.6-1.6z"/><path d="M5.5 7.4l1.6 1.6-1.6 1.6-1.6-1.6z"/><path d="M5.5 11.2l1.6 1.6-1.6 1.6-1.6-1.6z"/></g><path d="M8.4 5.2h3.2M8.4 9h3.2M8.4 12.8h3.2" stroke="#1c34d0" stroke-width="1.2"/><path d="M5.5 4v10" stroke="#1c34d0" stroke-width=".6"/></svg>
<div class="ss" style="left:1190px;top:93px;">Enums</div>
<svg style="left:1274px;top:93px" width="14" height="14" viewBox="0 0 14 14"><rect x="0.5" y="0.5" width="13" height="13" rx="2.5" fill="#c4c4c4" stroke="#a8a8a8"/><path d="M4 4L10 10M10 4L4 10" stroke="#fff" stroke-width="2"/></svg>
<svg style="left:1314px;top:91px" width="16" height="16" viewBox="0 0 16 16"><rect x="0.5" y="0.5" width="12" height="11" fill="#e8f8ff" stroke="#2a6ae0"/><rect x="0" y="0" width="13" height="3" fill="url(#gt2)"/><rect x="5.5" y="4.5" width="10" height="11" fill="#fff" stroke="#2f62c4"/><path d="M9.5 7h4.5M9.5 9.3h4.5M9.5 11.6h4.5M9.5 13.8h3.5" stroke="#2030a0" stroke-width="1"/><path d="M1 6.6h3.4v-1.8l3.4 3.1-3.4 3.1v-1.8h-3.4z" fill="#1a6a2a" stroke="#0e3e16" stroke-width=".5"/></svg>
<div class="ss" style="left:1377px;top:93px;">Imports</div>
<svg style="left:1468px;top:93px" width="14" height="14" viewBox="0 0 14 14"><rect x="0.5" y="0.5" width="13" height="13" rx="2.5" fill="#c4c4c4" stroke="#a8a8a8"/><path d="M4 4L10 10M10 4L4 10" stroke="#fff" stroke-width="2"/></svg>
<svg style="left:1507px;top:91px" width="16" height="16" viewBox="0 0 16 16"><rect x="1.5" y="0.5" width="14" height="13" fill="#e8f8ff" stroke="#2a6ae0"/><rect x="1" y="0" width="15" height="3" fill="url(#gt2)"/><rect x="0.5" y="5.5" width="9" height="10" fill="#fff" stroke="#2f62c4"/><path d="M2 8h4M2 10.3h4M2 12.6h4" stroke="#2030a0" stroke-width="1.2"/><path d="M6.6 6.8h3.6v-2l3.8 3.2-3.8 3.2v-2h-3.6z" fill="#1f6e2c" stroke="#0e3e16" stroke-width=".5"/></svg>
<div class="ss" style="left:1570px;top:93px;">Exports</div>
<svg style="left:1661px;top:93px" width="14" height="14" viewBox="0 0 14 14"><rect x="0.5" y="0.5" width="13" height="13" rx="2.5" fill="#c4c4c4" stroke="#a8a8a8"/><path d="M4 4L10 10M10 4L4 10" stroke="#fff" stroke-width="2"/></svg>
<div class="a" style="left:336px;top:112px;width:44px;height:569px;background:#fff;"></div>
<div class="a" style="left:385px;top:112px;width:1299px;height:568px;background:#fff;"></div>
<div class="a" style="left:385px;top:112px;width:1286px;height:15px;background:#e5e5e5;"></div>
<div class="a" style="left:469px;top:112px;width:28px;height:15px;background:#e8e436;"></div>
<div class="a" style="left:384px;top:112px;width:1px;height:569px;background:#6f747a;"></div>
<div class="a" style="left:0;top:113px;width:1672px;height:547px;overflow:hidden">
<div class="ln" style="top:0px">1</div>
<div class="code" style="top:0px">int __cdecl main(int argc, const char **argv, const char **envp)</div>
<div class="ln" style="top:15px">2</div>
<div class="code" style="top:15px">{</div>
<div class="ln" style="top:30px">3</div>
<div class="code" style="top:30px">  int result; <span class="c">//</span> <span class="r">eax</span></div>
<div class="ln" style="top:45px">4</div>
<div class="code" style="top:45px"><span class="g">  int v4</span>; <span class="c">//</span> <span class="r">ecx</span></div>
<div class="ln" style="top:60px">5</div>
<div class="code" style="top:60px"><span class="g">  int v5</span>; <span class="c">//</span> <span class="r">r8d</span></div>
<div class="ln" style="top:75px">6</div>
<div class="code" style="top:75px"><span class="g">  int v6</span>; <span class="c">//</span> <span class="r">r9d</span></div>
<div class="ln" style="top:90px">7</div>
<div class="code" style="top:90px"><span class="g">  void *v7</span>; <span class="c">//</span> <span class="r">rsp</span></div>
<div class="ln" style="top:105px">8</div>
<div class="code" style="top:105px">  __int64 v8; <span class="c">//</span> <span class="r">rax</span></div>
<div class="ln" style="top:120px">9</div>
<div class="code" style="top:120px">  __int64 v9; <span class="c">//</span> <span class="r">rax</span></div>
<div class="ln" style="top:135px">10</div>
<div class="code" style="top:135px"><span class="g">  __int64 v10</span>[<span class="g">3</span>]; <span class="c">//</span> <span class="r">[rsp+0h] [rbp-390h] BYREF</span></div>
<div class="ln" style="top:150px">11</div>
<div class="code" style="top:150px"><span class="g">  const char *Build</span>; <span class="c">//</span> <span class="r">[rsp+18h] [rbp-378h]</span></div>
<div class="ln" style="top:165px">12</div>
<div class="code" style="top:165px"><span class="g">  int v12</span>; <span class="c">//</span> <span class="r">[rsp+24h] [rbp-36Ch]</span></div>
<div class="ln" style="top:180px">13</div>
<div class="code" style="top:180px">  __int64 *v13; <span class="c">//</span> <span class="r">[rsp+28h] [rbp-368h]</span></div>
<div class="ln" style="top:195px">14</div>
<div class="code" style="top:195px">  const char **v14; <span class="c">//</span> <span class="r">[rsp+30h] [rbp-360h]</span></div>
<div class="ln" style="top:210px">15</div>
<div class="code" style="top:210px"><span class="g">  int v15</span>; <span class="c">//</span> <span class="r">[rsp+3Ch] [rbp-354h]</span></div>
<div class="ln" style="top:225px">16</div>
<div class="code" style="top:225px"><span class="g">  _DWORD v16</span>[<span class="g">52</span>]; <span class="c">//</span> <span class="r">[rsp+40h] [rbp-350h] BYREF</span></div>
<div class="ln" style="top:240px">17</div>
<div class="code" style="top:240px"><span class="g">  __int64 v17</span>[<span class="g">3</span>]; <span class="c">//</span> <span class="r">[rsp+110h] [rbp-280h] BYREF</span></div>
<div class="ln" style="top:255px">18</div>
<div class="code" style="top:255px"><span class="g">  int v18</span>; <span class="c">//</span> <span class="r">[rsp+128h] [rbp-268h] BYREF</span></div>
<div class="ln" style="top:270px">19</div>
<div class="code" style="top:270px"><span class="g">  int v19</span>; <span class="c">//</span> <span class="r">[rsp+12Ch] [rbp-264h] BYREF</span></div>
<div class="ln" style="top:285px">20</div>
<div class="code" style="top:285px"><span class="g">  __int64 v20</span>[<span class="g">2</span>]; <span class="c">//</span> <span class="r">[rsp+130h] [rbp-260h] BYREF</span></div>
<div class="ln" style="top:300px">21</div>
<div class="code" style="top:300px"><span class="g">  __int16 v21</span>[<span class="g">2</span>]; <span class="c">//</span> <span class="r">[rsp+140h] [rbp-250h] BYREF</span></div>
<div class="ln" style="top:315px">22</div>
<div class="code" style="top:315px"><span class="g">  int v22</span>; <span class="c">//</span> <span class="r">[rsp+144h] [rbp-24Ch]</span></div>
<div class="ln" style="top:330px">23</div>
<div class="code" style="top:330px"><span class="g">  char v23</span>[<span class="g">512</span>]; <span class="c">//</span> <span class="r">[rsp+150h] [rbp-240h] BYREF</span></div>
<div class="ln" style="top:345px">24</div>
<div class="code" style="top:345px"><span class="g">  const char *v24</span>; <span class="c">//</span> <span class="r">[rsp+350h] [rbp-40h]</span></div>
<div class="ln" style="top:360px">25</div>
<div class="code" style="top:360px">  unsigned int v25; <span class="c">//</span> <span class="r">[rsp+35Ch] [rbp-34h]</span></div>
<div class="ln" style="top:375px">26</div>
<div class="code" style="top:375px"><span class="g">  int v26</span>; <span class="c">//</span> <span class="r">[rsp+360h] [rbp-30h]</span></div>
<div class="ln" style="top:390px">27</div>
<div class="code" style="top:390px">  unsigned int j; <span class="c">//</span> <span class="r">[rsp+364h] [rbp-2Ch]</span></div>
<div class="ln" style="top:405px">28</div>
<div class="code" style="top:405px">  __int64 *v28; <span class="c">//</span> <span class="r">[rsp+368h] [rbp-28h]</span></div>
<div class="ln" style="top:420px">29</div>
<div class="code" style="top:420px">  unsigned int i; <span class="c">//</span> <span class="r">[rsp+374h] [rbp-1Ch]</span></div>
<div class="ln" style="top:435px">30</div>
<div class="code" style="top:435px">  __int64 *v31; <span class="c">//</span> <span class="r">[rsp+378h] [rbp-18h]</span></div>
<div class="ln" style="top:450px">31</div>
<div class="ln" style="top:465px">32</div>
<div class="code" style="top:465px">  <span class="r">v15</span> = <span class="r">argc</span>;</div>
<div class="dot" style="top:467px"></div>
<div class="ln" style="top:480px">33</div>
<div class="code" style="top:480px">  <span class="r">v14</span> = <span class="r">argv</span>;</div>
<div class="dot" style="top:482px"></div>
<div class="ln" style="top:495px">34</div>
<div class="code" style="top:495px">  <span class="f">write</span>(<span class="m">1LL</span>, <span class="s">"Corona"</span>, <span class="m">6LL</span>);</div>
<div class="dot" style="top:497px"></div>
<div class="ln" style="top:510px">35</div>
<div class="code" style="top:510px">  <span class="f">write</span>(<span class="m">1LL</span>, <span class="s">"\n"</span>, <span class="m">1LL</span>);</div>
<div class="dot" style="top:512px"></div>
<div class="ln" style="top:525px">36</div>
<div class="code" style="top:525px">  <span class="r">result</span> = <span class="f">fork</span>();</div>
<div class="dot" style="top:527px"></div>
<div class="code" style="top:540px">  if ( <span class="r">result</span> &lt;= <span class="m">0</span> )</div>
</div>
<div class="a" style="left:385px;top:660px;width:1287px;height:20px;background:#f0f0f0;"></div>
<div class="a" style="left:388px;top:664px;font:11.5px/14px 'Liberation Mono',monospace;white-space:pre;color:#000">00000DF4</div>
<div class="a" style="left:449px;top:664px;font:11.5px/14px 'Liberation Mono',monospace;white-space:pre;color:#000">main:1 (400DF4)</div>
<div class="a" style="left:444px;top:662px;width:1px;height:17px;background:#c8c8c8;"></div>
<div class="a" style="left:555px;top:662px;width:1px;height:17px;background:#c8c8c8;"></div>
<div class="a" style="left:568px;top:662px;width:1px;height:17px;background:#c8c8c8;"></div>
<div class="a" style="left:1672px;top:112px;width:12px;height:568px;background:#f0f0f0;"></div>
<div class="a" style="left:1671px;top:112px;width:1px;height:568px;background:#fff;"></div>
<div class="a" style="left:1672px;top:129px;width:12px;height:139px;background:#cdcdcd;"></div>
<svg style="left:1676px;top:118px" width="8" height="5" viewBox="0 0 8 5"><path d="M0.5 4.5L4 1L7.5 4.5" fill="none" stroke="#4a5560" stroke-width="1.6"/></svg>
<svg style="left:1676px;top:669px" width="8" height="5" viewBox="0 0 8 5"><path d="M0.5 0.5L4 4L7.5 0.5" fill="none" stroke="#4a5560" stroke-width="1.6"/></svg>
<div class="a" style="left:384px;top:680px;width:1300px;height:1px;background:#6f747a;"></div>
<div class="a" style="left:0px;top:685px;width:1684px;height:1px;background:#7f858d;"></div>
<div class="a" style="left:0px;top:686px;width:1684px;height:28px;background:#f0f0f0;"></div>
<svg style="left:0px;top:691px" width="14" height="16" viewBox="0 0 14 16"><rect x="-0.5" y="0.5" width="14" height="15" fill="#f4faff" stroke="#5a6c9c"/><rect x="-1" y="0" width="15" height="3" fill="#1c30d0"/><rect x="0" y="1" width="12" height="1" fill="#5a8af0"/><path d="M3 6.5h8M3 8.5h8M3 10.5h8M3 12.5h8" stroke="#6c7074" stroke-width="1"/></svg>
<div class="ss" style="left:21px;top:692px;">Output</div>
<svg style="left:1618px;top:696px" width="10" height="10" viewBox="0 0 10 10"><rect x="0.5" y="0.5" width="9" height="9" fill="#e8e8e8" stroke="#1e2a30"/><rect x="0" y="0" width="10" height="2" fill="#1e2a30"/></svg>
<svg style="left:1646px;top:696px" width="9" height="9" viewBox="0 0 9 9"><rect x="2.5" y="0.5" width="5" height="5" fill="none" stroke="#1e2a30"/><rect x="2" y="0" width="6" height="2" fill="#1e2a30"/><rect x="0.5" y="3.5" width="5" height="5" fill="#f0f0f0" stroke="#1e2a30"/><rect x="0" y="3" width="6" height="2" fill="#1e2a30"/></svg>
<svg style="left:1671px;top:697px" width="8" height="8" viewBox="0 0 8 8"><path d="M0.7 0.7L7.3 7.3M7.3 0.7L0.7 7.3" stroke="#1e2a30" stroke-width="1.7" fill="none"/></svg>
<div class="a" style="left:0px;top:714px;width:1684px;height:1px;background:#6c727a;"></div>
<div class="a" style="left:0px;top:715px;width:1684px;height:2px;background:#e8eaec;"></div>
<div class="a" style="left:0px;top:717px;width:1684px;height:1px;background:#8a9098;"></div>
<div class="a" style="left:0px;top:718px;width:1684px;height:89px;background:#fff;"></div>
<div class="a" style="left:0px;top:807px;width:1684px;height:1px;background:#7f858d;"></div>
<div class="a" style="left:0px;top:808px;width:1684px;height:1px;background:#dcdfe2;"></div>
<div class="a" style="left:0px;top:810px;width:43px;height:18px;background:#e1e1e1;border-right:1px solid #adadad;border-top:1px solid #adadad"></div>
<div class="ss" style="left:2px;top:814px;">Python</div>
<div class="a" style="left:47px;top:810px;width:1640px;height:20px;background:#fff;border:1px solid #7a7a7a"></div>
</body></html>
